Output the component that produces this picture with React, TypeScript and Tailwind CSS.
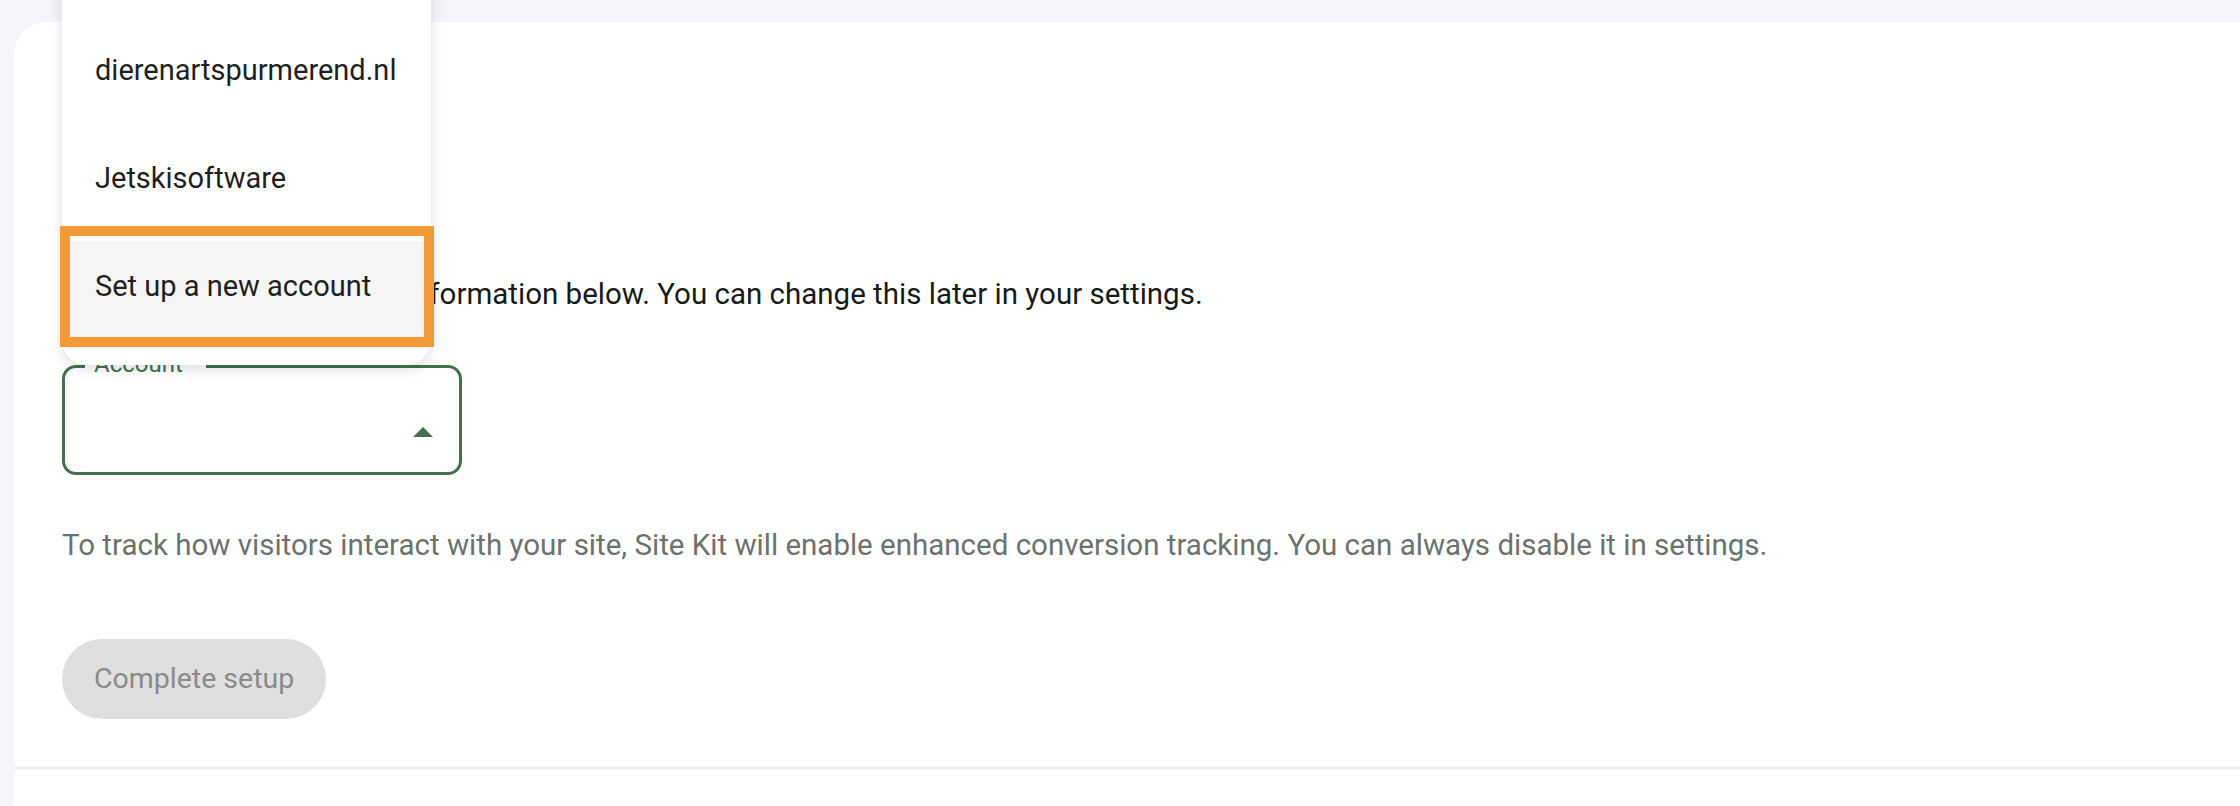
import React from 'react'

const ACCOUNTS = ['dierenartspurmerend.nl', 'Jetskisoftware', 'Set up a new account']

export default function App() {
  return (
    <div className="relative h-[806px] w-[2240px] overflow-hidden bg-[#f3f5f9] font-['Roboto',sans-serif]">
      {/* setup card */}
      <div className="ml-[14px] mt-[22px] flex h-[900px] w-[2300px] flex-col rounded-tl-[32px] bg-white pt-[252px]">
        <div className="flex flex-col items-start pl-[48px]">
          <p className="text-[29.5px] leading-[40px] text-[#161b18]">
            Please select the account information below. You can change this later in your settings.
          </p>

          <div className="relative mt-[51px] flex h-[110px] w-[400px] items-end justify-end rounded-[14px] border-[3.5px] border-[#44704f] pb-[35px] pr-[26px]">
            <span className="absolute left-[20px] top-[-16px] w-[121px] bg-white pl-[9px] text-[24px] leading-[24px] text-[#44704f]">
              Account
            </span>
            <svg width="20" height="10" viewBox="0 0 20 10" className="block">
              <path d="M0 10 L10 0 L20 10 Z" fill="#44704f" />
            </svg>
          </div>

          <p className="mt-[50px] text-[29.5px] leading-[40px] text-[#6c726e]">
            To track how visitors interact with your site, Site Kit will enable enhanced conversion tracking. You can always disable it in settings.
          </p>

          <button
            disabled
            className="mt-[74px] h-[80px] rounded-full bg-[#dfdfdf] px-[32px] text-[28.5px] text-[#8a8a8a]"
          >
            Complete setup
          </button>
        </div>

        <div className="mt-[48px] h-[2px] bg-[#ebebf0]" />
      </div>

      {/* open account menu */}
      <div className="absolute left-[62px] top-[-40px] flex w-[369px] flex-col rounded-b-[25px] bg-white pb-[16px] pt-[65px] shadow-[0_4px_14px_rgba(0,0,0,0.13)]">
        {ACCOUNTS.map((name, i) => (
          <div
            key={name}
            className={
              i === ACCOUNTS.length - 1
                ? 'flex h-[108px] items-center bg-[#f5f5f5] pb-[16px] pl-[33px] text-[29px] text-[#1f1f1f]'
                : 'flex h-[108px] items-center pb-[16px] pl-[33px] text-[29px] text-[#1f1f1f]'
            }
          >
            {name}
          </div>
        ))}
      </div>

      {/* highlight annotation */}
      <div className="absolute left-[60px] top-[226px] h-[121px] w-[374px] border-[10px] border-[#f29a38]" />
    </div>
  )
}
